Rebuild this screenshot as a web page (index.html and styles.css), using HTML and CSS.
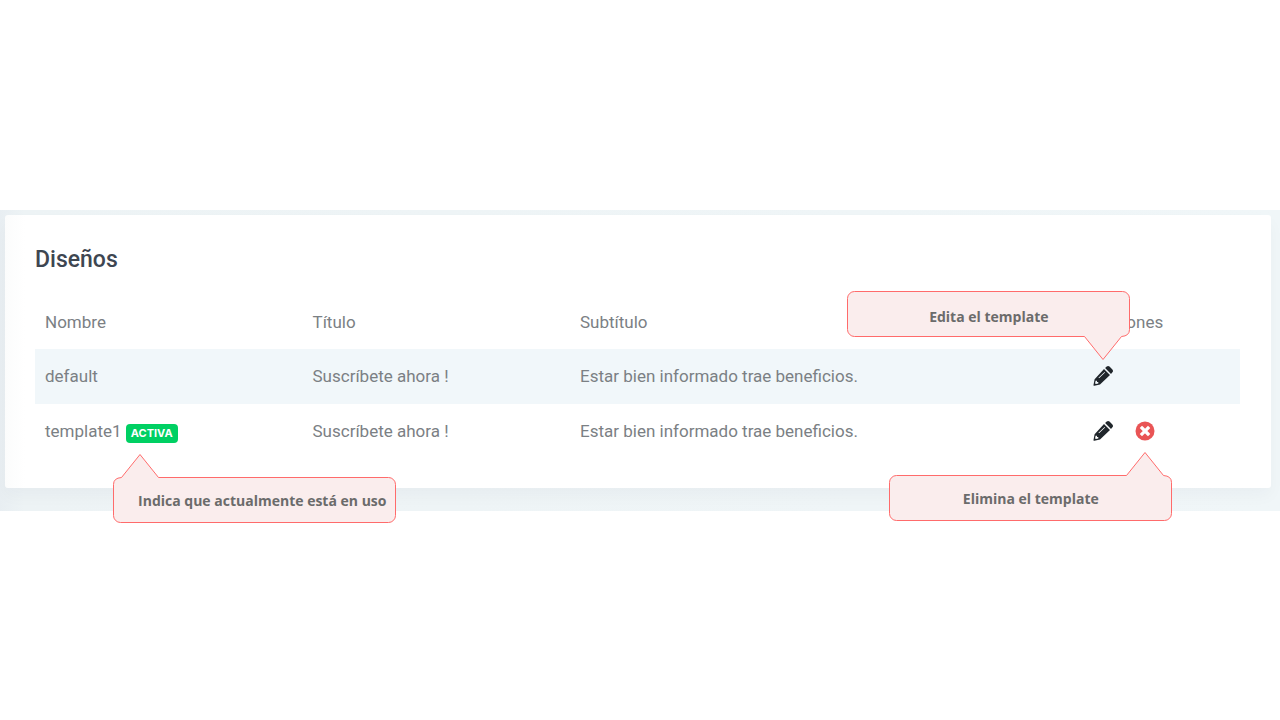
FILE: index.html
```
<!DOCTYPE html>
<html lang="es">

<head>
    <meta charset="UTF-8">
    <meta name="viewport" content="width=device-width, initial-scale=1.0">
    <title>Diseños</title>
    <link rel="stylesheet" href="styles.css">
</head>

<body>
    <!-- iconos y formas compartidas -->
    <svg class="sprite" aria-hidden="true">
        <symbol id="pencil" viewBox="0 0 20 20">
            <path fill="currentColor" fill-rule="evenodd" d="M11 3l6 6L7 18.600l-5.600 1.200c-.6.1-1-.3-.9-.9l1.100-5.600zM11.300 6.200l-5.600 5.300c-.2.2-.2.500 0 .600.2.2.400.2.600 0l5.500-5.300c.2-.2.2-.4 0-.6-.2-.2-.4-.2-.5 0zM2.600 14.700l-.5 2.600.700.700 2.500-.5v-1.400H4v-1.400z" />
            <path fill="currentColor" d="M12.100 2L13.700.6c.8-.8 2-.8 2.800 0l2.900 2.900c.8.8.8 2 0 2.800L18 7.900z" />
        </symbol>
        <symbol id="remove" viewBox="0 0 20 20">
            <circle cx="10" cy="10" r="9.5" fill="currentColor" />
            <path d="M7 7l6 6M13 7l-6 6" stroke="#fff" stroke-width="3.2" stroke-linecap="square" />
        </symbol>
        <symbol id="bubble" viewBox="0 0 283 69">
            <path fill="#faeded" stroke="#ff6b6b" d="M8.500 23.500L27 .500L45.500 23.500H275.500a7 7 0 0 1 7 7V61.500a7 7 0 0 1-7 7H7.500a7 7 0 0 1-7-7V30.500Q.500 24 8.500 23.500z" />
        </symbol>
    </svg>

    <main class="panel">
        <section class="card">
            <h1>Diseños</h1>
            <table class="designs">
                <colgroup>
                    <col class="col-name">
                    <col class="col-title">
                    <col class="col-subtitle">
                    <col class="col-actions">
                </colgroup>
                <thead>
                    <tr>
                        <th>Nombre</th>
                        <th>Título</th>
                        <th>Subtítulo</th>
                        <th>Acciones</th>
                    </tr>
                </thead>
                <tbody>
                    <tr>
                        <td>default</td>
                        <td>Suscríbete ahora !</td>
                        <td>Estar bien informado trae beneficios.</td>
                        <td>
                            <div class="actions">
                                <div class="anchor">
                                    <button type="button" class="edit" aria-label="Editar"><svg><use href="#pencil" /></svg></button>
                                    <div class="callout callout-above">
                                        <svg><use href="#bubble" /></svg>
                                        <span>Edita el template</span>
                                    </div>
                                </div>
                            </div>
                        </td>
                    </tr>
                    <tr>
                        <td>template1
                            <span class="anchor">
                                <span class="badge">ACTIVA</span>
                                <span class="callout callout-below">
                                    <svg><use href="#bubble" /></svg>
                                    <span>Indica que actualmente está en uso</span>
                                </span>
                            </span>
                        </td>
                        <td>Suscríbete ahora !</td>
                        <td>Estar bien informado trae beneficios.</td>
                        <td>
                            <div class="actions">
                                <button type="button" class="edit" aria-label="Editar"><svg><use href="#pencil" /></svg></button>
                                <div class="anchor">
                                    <button type="button" class="remove" aria-label="Eliminar"><svg><use href="#remove" /></svg></button>
                                    <div class="callout callout-below callout-left">
                                        <svg><use href="#bubble" /></svg>
                                        <span>Elimina el template</span>
                                    </div>
                                </div>
                            </div>
                        </td>
                    </tr>
                </tbody>
            </table>
        </section>
    </main>
</body>

</html>
```
FILE: styles.css
```
:root {
    --panel-bg: #f0f6f9;
    --stripe-bg: #f1f7fa;
    --text-color: #7b8084;
    --title-color: #3e4651;
    --badge-bg: #00d063;
    --remove-color: #e95455;
}

* {
    box-sizing: border-box;
}

body {
    margin: 0;
    min-height: 100vh;
    display: flex;
    flex-direction: column;
    justify-content: center;
    background-color: #fff;
    color: var(--text-color);
    font-family: Roboto, sans-serif;
    font-size: 17px;
    line-height: 24px;
}

.sprite {
    display: none;
}

.panel {
    padding: 5px 9px 23px 5px;
    background: linear-gradient(to right, #e8eef2, #edf3f5 24px, #f0f6f8);
}

.card {
    padding: 30px 31px 30px 30px;
    border-radius: 3px;
    background: linear-gradient(to right, #fbfcfc, #fff 20px);
    box-shadow: 0 8px 16px rgba(8, 40, 60, 0.03);
}

h1 {
    margin: 0 0 21px;
    color: var(--title-color);
    font-size: 23px;
    font-weight: 500;
    line-height: 29px;
}

.designs {
    width: 100%;
    table-layout: fixed;
    border-collapse: collapse;
}

.col-name,
.col-title {
    width: 22.2%;
}

.col-subtitle {
    width: 42.6%;
}

th,
td {
    height: 54px;
    padding: 0 10px;
    text-align: left;
    font-weight: 400;
    white-space: nowrap;
}

tbody tr:nth-child(odd) {
    height: 55px;
    background-color: var(--stripe-bg);
}

.actions {
    display: flex;
    align-items: center;
    gap: 22px;
}

.anchor {
    position: relative;
    display: inline-block;
}

button {
    display: block;
    padding: 0;
    border: none;
    background: none;
    cursor: pointer;
}

button svg {
    display: block;
    width: 20px;
    height: 20px;
}

.edit {
    color: #20262b;
}

.remove {
    color: var(--remove-color);
}

.badge {
    display: block;
    padding: 0 5px;
    border-radius: 4px;
    background-color: var(--badge-bg);
    color: #fff;
    font-family: Inter, sans-serif;
    font-size: 11px;
    font-weight: 700;
    line-height: 19px;
}

/* globos de ayuda */
.callout {
    position: absolute;
    z-index: 1;
    width: 283px;
    height: 69px;
    padding-top: 24px;
    color: #6b6b6b;
    font-family: "Open Sans", sans-serif;
    font-size: 14px;
    font-weight: 700;
    line-height: 45px;
    text-align: center;
}

.callout svg {
    position: absolute;
    inset: 0;
    width: 100%;
    height: 100%;
}

.callout span {
    position: relative;
}

.callout-below {
    top: calc(100% + 11px);
    left: -13px;
    padding-left: 16px;
}

.callout-left {
    left: auto;
    right: -17px;
    padding-left: 0;
}

.callout-left svg {
    transform: scaleX(-1);
}

.callout-above {
    bottom: calc(100% + 6px);
    right: -17px;
    padding: 3px 0 0;
}

.callout-above svg {
    transform: rotate(180deg);
}
```
